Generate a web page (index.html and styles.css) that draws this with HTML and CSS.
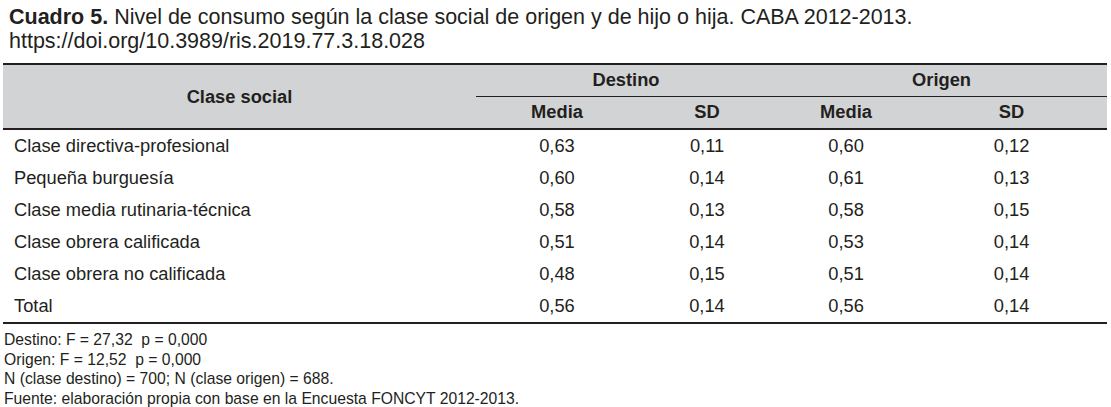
FILE: index.html
```html
<!DOCTYPE html>
<html lang="es">
<head>
<meta charset="utf-8">
<title>Cuadro 5</title>
<link rel="stylesheet" href="styles.css">
</head>
<body>
<div class="caption">
  <p class="title"><b>Cuadro 5.</b> Nivel de consumo según la clase social de origen y de hijo o hija. CABA 2012-2013.</p>
  <p class="title">https://doi.org/10.3989/ris.2019.77.3.18.028</p>
</div>
<table class="data">
  <colgroup>
    <col class="c-label">
    <col class="c-m1">
    <col class="c-s1">
    <col class="c-m2">
    <col class="c-s2">
  </colgroup>
  <thead>
    <tr class="h1">
      <th rowspan="2" class="label-head">Clase social</th>
      <th colspan="2" class="group">Destino</th>
      <th colspan="2" class="group">Origen</th>
    </tr>
    <tr class="h2">
      <th class="sub first">Media</th>
      <th class="sub">SD</th>
      <th class="sub">Media</th>
      <th class="sub">SD</th>
    </tr>
  </thead>
  <tbody>
    <tr><td class="name">Clase directiva-profesional</td><td>0,63</td><td>0,11</td><td>0,60</td><td>0,12</td></tr>
    <tr><td class="name">Pequeña burguesía</td><td>0,60</td><td>0,14</td><td>0,61</td><td>0,13</td></tr>
    <tr><td class="name">Clase media rutinaria-técnica</td><td>0,58</td><td>0,13</td><td>0,58</td><td>0,15</td></tr>
    <tr><td class="name">Clase obrera calificada</td><td>0,51</td><td>0,14</td><td>0,53</td><td>0,14</td></tr>
    <tr><td class="name">Clase obrera no calificada</td><td>0,48</td><td>0,15</td><td>0,51</td><td>0,14</td></tr>
    <tr><td class="name">Total</td><td>0,56</td><td>0,14</td><td>0,56</td><td>0,14</td></tr>
  </tbody>
</table>
<div class="notes">
  <p>Destino: F = 27,32&nbsp; p = 0,000</p>
  <p>Origen: F = 12,52&nbsp; p = 0,000</p>
  <p>N (clase destino) = 700; N (clase origen) = 688.</p>
  <p>Fuente: elaboración propia con base en la Encuesta FONCYT 2012-2013.</p>
</div>
</body>
</html>
```
FILE: styles.css
```css
html, body {
  margin: 0;
  padding: 0;
  background: #ffffff;
}
body {
  font-family: "Liberation Sans", Arial, sans-serif;
  color: #231f20;
}
.caption {
  padding: 6px 0 0 9px;
  height: 63px;
  box-sizing: border-box;
}
.title {
  margin: 0;
  font-size: 21.5px;
  line-height: 23.5px;
}
.data {
  margin-left: 3px;
  width: 1104px;
  border-collapse: collapse;
  table-layout: fixed;
  font-size: 18.3px;
}
.c-label { width: 473px; }
.c-m1 { width: 162px; }
.c-s1 { width: 138px; }
.c-m2 { width: 140px; }
.c-s2 { width: 191px; }
.data thead {
  background: #d1d3d4;
}
.data thead tr.h1 {
  border-top: 2px solid #231f20;
  height: 32px;
}
.data thead tr.h2 {
  border-bottom: 2px solid #231f20;
  height: 33px;
}
.data th {
  font-weight: bold;
  text-align: center;
  padding: 0;
  vertical-align: middle;
}
.data th.label-head {
  padding-left: 0;
}
.data th.group {
  border-bottom: 1.5px solid #231f20;
}
.data td {
  text-align: center;
  padding: 0;
  height: 32px;
  vertical-align: middle;
}
.data td.name {
  text-align: left;
  padding-left: 11px;
}
.data tbody tr:last-child td {
  border-bottom: 2px solid #231f20;
}
.notes {
  padding: 6px 0 0 4px;
  font-size: 15.7px;
  line-height: 19.7px;
}
.notes p {
  margin: 0;
}
```
